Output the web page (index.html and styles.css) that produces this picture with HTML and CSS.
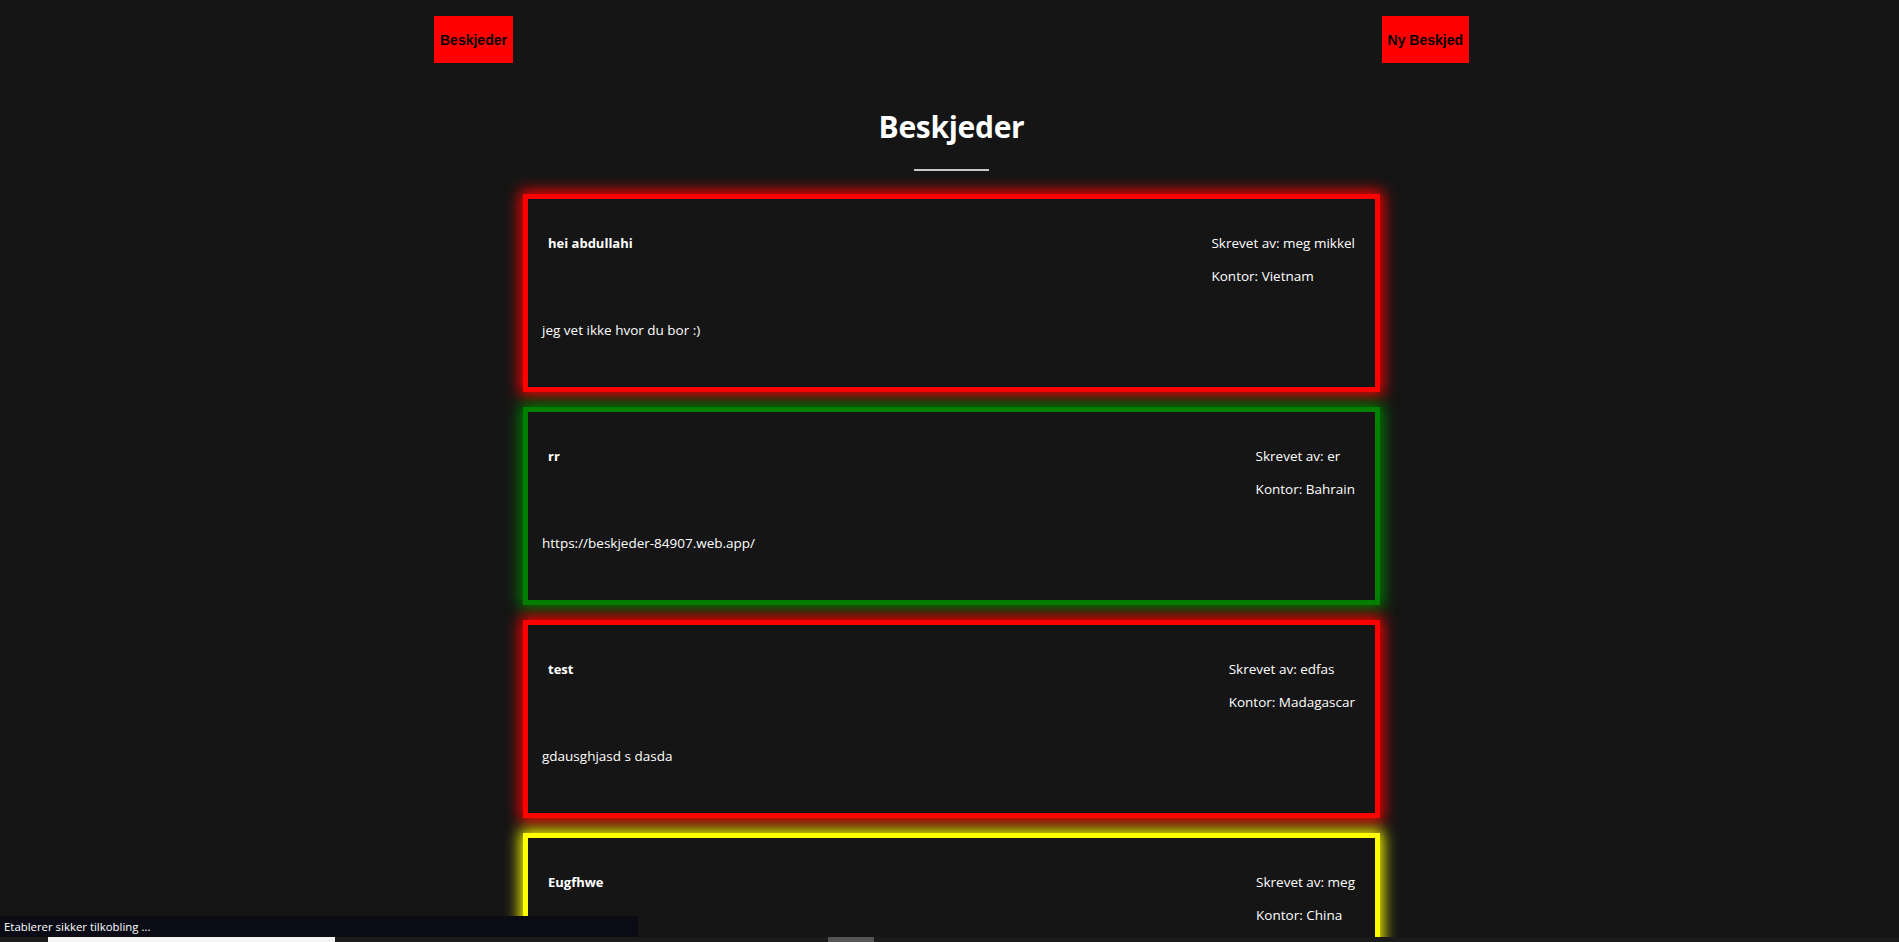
FILE: index.html
```html
<!DOCTYPE html>
<html lang="no">
<head>
<meta charset="utf-8">
<title>Beskjeder</title>
<link rel="stylesheet" href="styles.css">
</head>
<body>
<div class="page">
  <nav class="topbar">
    <button class="nav-btn">Beskjeder</button>
    <button class="nav-btn">Ny Beskjed</button>
  </nav>
  <main class="content">
    <h1 class="page-title">Beskjeder</h1>
    <div class="title-rule"></div>
    <section class="card card--red">
      <div class="card-head">
        <h4 class="card-title">hei abdullahi</h4>
        <div class="card-meta">
          <p class="meta-line">Skrevet av: meg mikkel</p>
          <p class="meta-line">Kontor: Vietnam</p>
        </div>
      </div>
      <p class="card-body">jeg vet ikke hvor du bor :)</p>
    </section>
    <section class="card card--green">
      <div class="card-head">
        <h4 class="card-title">rr</h4>
        <div class="card-meta">
          <p class="meta-line">Skrevet av: er</p>
          <p class="meta-line">Kontor: Bahrain</p>
        </div>
      </div>
      <p class="card-body">https://beskjeder-84907.web.app/</p>
    </section>
    <section class="card card--red">
      <div class="card-head">
        <h4 class="card-title">test</h4>
        <div class="card-meta">
          <p class="meta-line">Skrevet av: edfas</p>
          <p class="meta-line">Kontor: Madagascar</p>
        </div>
      </div>
      <p class="card-body">gdausghjasd s dasda</p>
    </section>
    <section class="card card--yellow">
      <div class="card-head">
        <h4 class="card-title">Eugfhwe</h4>
        <div class="card-meta">
          <p class="meta-line">Skrevet av: meg</p>
          <p class="meta-line">Kontor: China</p>
        </div>
      </div>
      <p class="card-body">&nbsp;</p>
    </section>
  </main>
</div>
<div class="status-bar">Etablerer sikker tilkobling ...</div>
<div class="bottom-strip">
  <div class="strip-field"></div>
  <div class="strip-thumb"></div>
</div>
</body>
</html>
```
FILE: styles.css
```css
* { box-sizing: border-box; }
html, body {
  margin: 0;
  padding: 0;
  background: #151515;
}
body {
  font-family: "Open Sans", "Noto Sans", sans-serif;
  color: #fff;
  font-size: 13.5px;
}
.page {
  padding-left: 4px;
  padding-bottom: 40px;
}
.topbar {
  width: 1035px;
  margin: 16px auto 0;
  display: flex;
  justify-content: space-between;
}
.nav-btn {
  height: 47px;
  padding: 0 6px;
  border: none;
  background: #ff0000;
  color: #000;
  font-family: "Liberation Sans", Arial, sans-serif;
  font-size: 14px;
  font-weight: bold;
}
.content {
  width: 857px;
  margin: 0 auto;
  display: flex;
  flex-direction: column;
  align-items: stretch;
}
.page-title {
  margin: 44px 0 0;
  text-align: center;
  font-size: 30px;
  line-height: 40px;
  letter-spacing: -0.3px;
  font-weight: 700;
  color: #fff;
}
.title-rule {
  width: 75px;
  height: 2px;
  background: #c8c8c8;
  margin: 22px auto 23px;
}
.card {
  border: 5px solid;
  padding: 34px 14px 47px;
  margin-bottom: 15px;
  background: #151515;
}
.card--red { border-color: #ff0000; box-shadow: 0 0 14px 3px #ff0000; }
.card--green { border-color: #008000; box-shadow: 0 0 14px 3px #008000; }
.card--yellow { border-color: #ffff00; box-shadow: 0 0 14px 3px #ffff00; }
.card-head {
  display: flex;
  justify-content: space-between;
  align-items: flex-start;
  padding: 0 6px;
}
.card-title {
  margin: 0;
  font-size: 13px;
  line-height: 20px;
  font-weight: 700;
}
.card-meta {
  display: flex;
  flex-direction: column;
  gap: 13px;
}
.meta-line {
  margin: 0;
  line-height: 20px;
}
.card-body {
  margin: 34px 0 0;
  line-height: 20px;
}
.status-bar {
  position: fixed;
  left: 0;
  bottom: 5px;
  width: 638px;
  height: 21px;
  background: #0b0b15;
  color: #fff;
  font-family: "Open Sans", sans-serif;
  font-size: 11.4px;
  line-height: 21px;
  padding-left: 4px;
}
.bottom-strip {
  position: fixed;
  left: 0;
  right: 0;
  bottom: 0;
  height: 5px;
  background: #1b1b1b;
}
.strip-field {
  position: absolute;
  left: 48px;
  width: 287px;
  top: 0;
  bottom: 0;
  background: #f4f4f4;
}
.strip-thumb {
  position: absolute;
  left: 828px;
  width: 46px;
  top: 0;
  bottom: 0;
  background: #555;
}
```
